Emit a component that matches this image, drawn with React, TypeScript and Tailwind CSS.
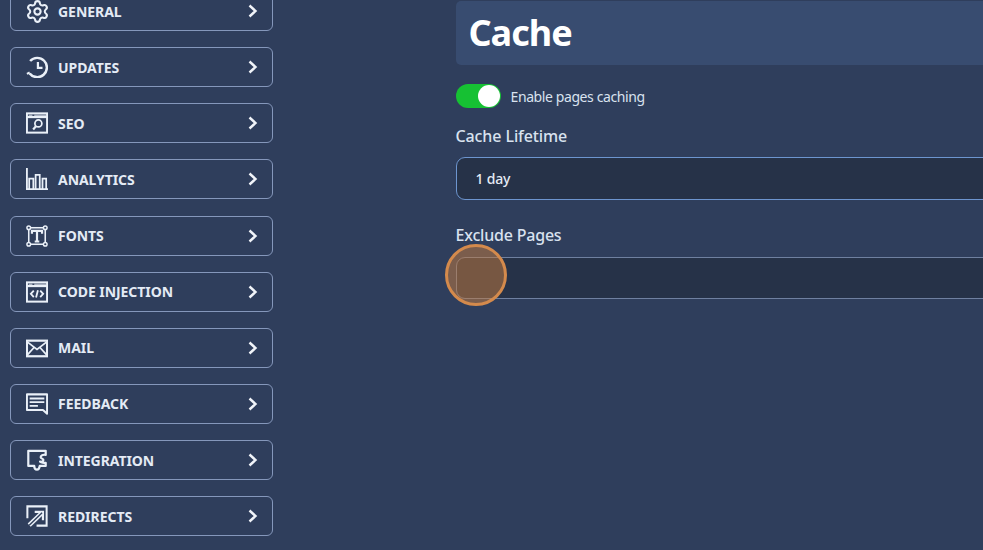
import React from "react";
import { Settings } from "lucide-react";

const S = { fill: "none", stroke: "#eaf0f8", strokeWidth: 2.200 } as const;

function Ico({ children }: { children: React.ReactNode }) {
  return (
    <svg width="22" height="22" viewBox="0 0 24 24" className="shrink-0" {...S}>
      {children}
    </svg>
  );
}

const icons: Record<string, React.ReactNode> = {
  gear: <Settings size={25} color="#eaf0f8" strokeWidth={2} className="ml-[-1.500px] mr-[-1.500px] shrink-0" />,
  clock: (
    <Ico>
      <path d="M4.500 5.500A10.500 10.500 0 1 1 4 19" strokeWidth={2.700} />
      <path d="M1 19.500l3-1.500" strokeWidth={2.200} />
      <path d="M13 6.500v6.500h5" strokeWidth={2.400} />
    </Ico>
  ),
  seo: (
    <Ico>
      <rect x="1" y="1.500" width="22" height="21" />
      <path d="M1 5.500h22" strokeWidth={2.400} />
      <path d="M3 3.500h4M9 3.500h13" strokeWidth={1} />
      <circle cx="13.500" cy="12.500" r="3.800" strokeWidth={1.900} />
      <path d="M10.800 15.500l-3 3.500" strokeWidth={2.400} />
    </Ico>
  ),
  chart: (
    <Ico>
      <path d="M1 0v23h23" strokeWidth={2} />
      <path d="M3.500 23V11.500h4.500V23M10.500 23V7.500H15V23M18 23V11.500h4V23" strokeWidth={1.900} />
    </Ico>
  ),
  font: (
    <Ico>
      <rect x="3" y="3" width="18" height="18" strokeWidth={1.700} />
      <circle cx="3" cy="3" r="2" fill="#2f3e5c" strokeWidth={1.600} />
      <circle cx="21" cy="3" r="2" fill="#2f3e5c" strokeWidth={1.600} />
      <circle cx="3" cy="21" r="2" fill="#2f3e5c" strokeWidth={1.600} />
      <circle cx="21" cy="21" r="2" fill="#2f3e5c" strokeWidth={1.600} />
      <path d="M6.500 9.500V6.500h11v3M12 6.500V18M9.500 18h5" strokeWidth={2.400} />
    </Ico>
  ),
  code: (
    <Ico>
      <rect x="1" y="1.500" width="22" height="21" />
      <path d="M1 5.500h22" strokeWidth={2.400} />
      <path d="M3 3.500h4M9 3.500h13" strokeWidth={1} />
      <path d="M8.500 10.500l-3.200 3.500 3.200 3.500M15.500 10.500l3.200 3.500-3.200 3.500M13 10l-2 8" strokeWidth={2} />
    </Ico>
  ),
  mail: (
    <Ico>
      <rect x="1" y="4" width="22" height="17" strokeWidth={2.400} />
      <path d="M1 5l11 8.500L23 5M1 20l8-8.800M23 20l-8-8.800" strokeWidth={1.900} />
    </Ico>
  ),
  feedback: (
    <Ico>
      <path d="M1 1.500h22v21l-4.500-4H1z" strokeLinejoin="round" />
      <path d="M4 6h16M4 10h16M4 14h9" strokeWidth={2} />
    </Ico>
  ),
  puzzle: (
    <Ico>
      <path d="M2.500 2h19v4.500c-4-.8-5.500 1-5.500 2.500s3 1.500 3 3-2.500 2.200-3.500 1.700 2 2.300 6 1.300v3.500h-6.500c-.5 3-1.500 4-3 4s-3-1.500-3-4h-6.500z" strokeLinejoin="round" strokeWidth={2.400} />
    </Ico>
  ),
  redirect: (
    <Ico>
      <path d="M1.500 14.500V1.500h21v21H11.500" strokeWidth={2.200} />
      <path d="M9.500 7.500h9v9" strokeWidth={2.400} />
      <path d="M17.500 8.500L3.500 22" strokeWidth={4.800} />
      <path d="M17.500 8.500L3.500 22" strokeWidth={1.500} stroke="#2f3e5c" />
    </Ico>
  ),
};

const items: [string, string][] = [
  ["GENERAL", "gear"],
  ["UPDATES", "clock"],
  ["SEO", "seo"],
  ["ANALYTICS", "chart"],
  ["FONTS", "font"],
  ["CODE INJECTION", "code"],
  ["MAIL", "mail"],
  ["FEEDBACK", "feedback"],
  ["INTEGRATION", "puzzle"],
  ["REDIRECTS", "redirect"],
];

export default function App() {
  return (
    <div
      className="relative flex h-[550px] w-[983px] overflow-hidden bg-[#2f3e5c]"
      style={{ fontFamily: '"Noto Sans", sans-serif' }}
    >
      <nav className="ml-[10px] mt-[-9px] flex w-[263px] shrink-0 flex-col gap-[16.150px]">
        {items.map(([label, ic]) => (
          <div
            key={label}
            className="flex h-10 shrink-0 items-center rounded-[6px] border border-[#8597bb] pl-[15px] pr-[13px]"
          >
            {icons[ic]}
            <span className="ml-[10px] text-[14px] font-bold tracking-[-0.05px] text-[#e4ebf5]">{label}</span>
            <svg width="12" height="14" viewBox="0 0 12 14" className="ml-auto" fill="none" stroke="#f1f4f9" strokeWidth="2.400">
              <path d="M2.500 1.500 8.500 7l-6 5.500" />
            </svg>
          </div>
        ))}
      </nav>

      <main className="ml-[182.500px] mt-px w-[900px] shrink-0">
        <div className="flex h-16 items-center rounded-[5px] bg-[#384c70] pl-[13px]">
          <h1 className="text-[36px] font-bold leading-none tracking-[-1px] text-white">Cache</h1>
        </div>
        <div className="mt-[19px] flex items-center">
          <div className="flex h-6 w-[45px] items-center justify-end rounded-full bg-[#16c133] pr-[1px]">
            <div className="h-[22px] w-[22px] rounded-full bg-white" />
          </div>
          <span className="ml-[10px] text-[14px] tracking-[-0.4px] text-[#d9e2ef]">Enable pages caching</span>
        </div>
        <div className="mt-[14px] text-[16px] leading-[28px] font-medium tracking-[-0.1px] text-[#d9e2ef]">Cache Lifetime</div>
        <div className="mt-[7px] flex h-[43px] items-center rounded-[9px] border-[1.500px] border-[#6d95cf] bg-[#263248] pl-[19px] text-[14px] font-medium tracking-[-0.2px] text-[#e4ebf5]">
          1 day
        </div>
        <div className="mt-[21px] text-[16px] leading-[28px] font-medium tracking-[-0.2px] text-[#d9e2ef]">Exclude Pages</div>
        <div className="mt-[8px] h-[42px] rounded-[9px] border-[1.500px] border-[#6f80a0] bg-[#263248]" />
      </main>

      <div className="absolute left-[445px] top-[243.500px] h-[62px] w-[62px] rounded-full border-[3px] border-[#d48a4c] bg-[#c77b3c]/50" />
    </div>
  );
}
